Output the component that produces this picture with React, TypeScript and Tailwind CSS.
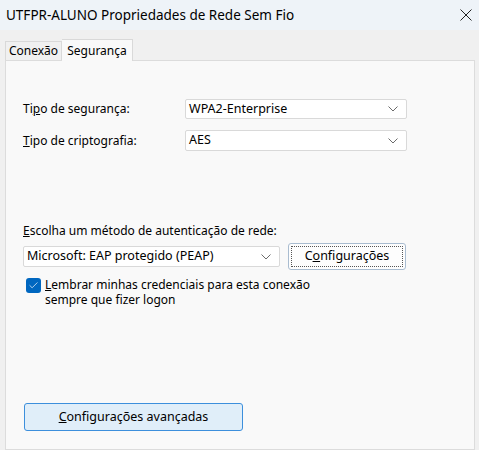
import { Check } from 'lucide-react';

const font = { fontFamily: '"Noto Sans", "Segoe UI", sans-serif' };

function Chevron() {
    return (
        <svg width="10" height="6" viewBox="0 0 10 6" className="text-[#6b6b6b]">
            <path d="M0.5 0.5 L5 5 L9.5 0.5" fill="none" stroke="currentColor" strokeWidth="1" />
        </svg>
    );
}

function Select({ value, className }: { value: string; className: string }) {
    return (
        <div className={`flex items-center justify-between bg-white border border-[#d9d9d9] rounded-[2px] pl-[3px] pr-[8px] ${className}`}>
            <span className="text-[12.5px] text-black leading-none">{value}</span>
            <Chevron />
        </div>
    );
}

export default function App() {
    return (
        <div className="w-[479px] h-[450px] bg-[#f0f0f0] overflow-hidden flex flex-col" style={font}>
            {/* Title bar */}
            <div className="h-[30px] bg-[#eef3f8] flex items-center justify-between pl-[6px] pr-[6px] shrink-0">
                <span className="text-[13.5px] text-black">UTFPR-ALUNO Propriedades de Rede Sem Fio</span>
                <svg width="12" height="12" viewBox="0 0 12 12" className="mr-[1px]">
                    <path d="M0.5 0.5 L11.5 11.5 M11.5 0.5 L0.5 11.5" stroke="#222" strokeWidth="1" />
                </svg>
            </div>

            {/* Tabs */}
            <div className="flex items-end pl-[5px] pt-[8px] h-[30px] shrink-0">
                <div className="h-[19px] w-[57px] flex items-center justify-center border border-b-0 border-[#d9d9d9] bg-[#f0f0f0] text-[12px] text-black">
                    Conexão
                </div>
                <div className="h-[22px] w-[71px] flex items-center justify-center border border-b-0 border-l-0 border-[#d9d9d9] bg-[#f9f9f9] text-[12px] text-black relative top-[1px] z-10">
                    Segurança
                </div>
            </div>

            {/* Panel */}
            <div className="ml-[5px] mr-[4px] flex-1 bg-[#f9f9f9] border border-[#dcdcdc] flex flex-col pl-[17px]">
                <div className="mt-[38px] flex items-center h-[20px]">
                    <span className="w-[162px] text-[12px] text-black">Ti<u>p</u>o de segurança:</span>
                    <Select value="WPA2-Enterprise" className="w-[222px] h-[20px]" />
                </div>
                <div className="mt-[11px] flex items-center h-[21px]">
                    <span className="w-[162px] text-[12px] text-black"><u>T</u>ipo de criptografia:</span>
                    <Select value="AES" className="w-[222px] h-[21px]" />
                </div>

                <div className="mt-[74px] text-[12px] text-black leading-none"><u>E</u>scolha um método de autenticação de rede:</div>
                <div className="mt-[6px] flex items-center gap-[8px]">
                    <Select value="Microsoft: EAP protegido (PEAP)" className="w-[257px] h-[21px]" />
                    <button className="w-[118px] h-[27px] bg-[#fdfdfd] border border-[#a9bcd0] rounded-[3px] p-[2px]">
                        <div className="w-full h-full border border-dotted border-[#555] flex items-center justify-center text-[12.5px] text-black">
                            C<u>o</u>nfigurações
                        </div>
                    </button>
                </div>

                <div className="mt-[7px] flex items-start gap-[4px] pl-[3px]">
                    <div className="w-[15px] h-[15px] mt-[1px] rounded-[3px] bg-[#0067c0] flex items-center justify-center shrink-0">
                        <Check size={11} strokeWidth={1.5} color="white" />
                    </div>
                    <div className="text-[12px] text-black leading-[15px]">
                        <u>L</u>embrar minhas credenciais para esta conexão<br />sempre que fizer logon
                    </div>
                </div>

                <button className="mt-[96px] ml-[1px] w-[219px] h-[28px] bg-[#e0eef9] border border-[#3c8fdc] rounded-[3px] flex items-center justify-center text-[12.5px] text-black">
                    <span><u>C</u>onfigurações avançadas</span>
                </button>
            </div>
        </div>
    );
}
